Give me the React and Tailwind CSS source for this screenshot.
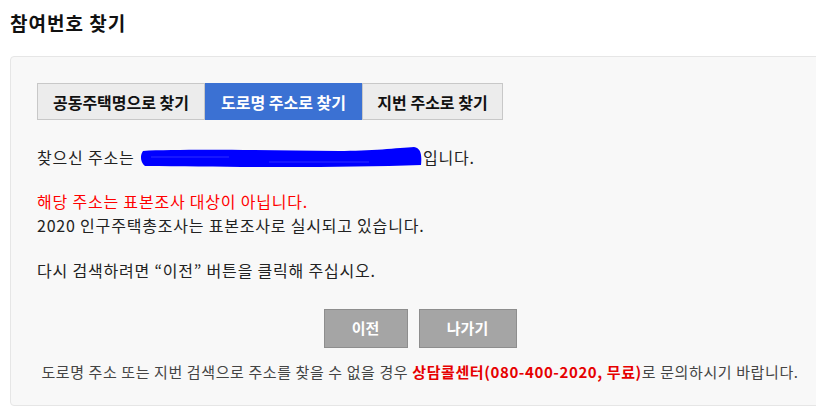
import React from 'react';

const font = { fontFamily: '"Noto Sans CJK KR", "Noto Sans", sans-serif' };

const tabs = [
  { label: '공동주택명으로 찾기', active: false, w: 'w-[168px]' },
  { label: '도로명 주소로 찾기', active: true, w: 'w-[157px]' },
  { label: '지번 주소로 찾기', active: false, w: 'w-[141px]' },
];

const Redaction = () => (
  <svg width="284" height="24" viewBox="0 0 284 24" className="inline-block">
    <path
      d="M4 6 C40 4 120 5 200 6 C230 6 260 3 275 2 C282 3 283 10 282 20 C200 23 90 22 6 21 C1 17 1 10 4 6 Z"
      fill="#0000ff"
    />
    <path d="M12 12 H90 M130 17 H230" stroke="#4d4dff" strokeWidth="1" opacity="0.6" />
  </svg>
);

export default function App() {
  return (
    <div className="w-[816px] h-[407px] overflow-hidden bg-white text-[#222]" style={font}>
      <h1 className="pl-[10px] pt-[9px] text-[19px] leading-[28px] font-bold tracking-[1px] text-[#111]">
        참여번호 찾기
      </h1>

      <div className="ml-[10px] mt-[19px] w-[820px] rounded-[4px] border border-[#e6e6e6] bg-[#f8f8f8] px-[26px] pt-[26px] pb-[21px]">
        {/* Tabs */}
        <div className="flex">
          {tabs.map((t) => (
            <div
              key={t.label}
              className={
                'h-[37px] flex items-center justify-center border text-[16px] font-bold ' +
                t.w +
                (t.active
                  ? ' bg-[#3b71d3] border-[#3b71d3] text-white'
                  : ' bg-[#ececec] border-[#c8c8c8] text-[#111]')
              }
            >
              {t.label}
            </div>
          ))}
        </div>

        {/* Result message */}
        <div className="mt-[25px] text-[16px] leading-[24px] tracking-[0.8px]">
          <p className="flex items-center">
            찾으신 주소는&nbsp;
            <Redaction />
            입니다.
          </p>
          <p className="mt-[20px] text-[#ff0000]">해당 주소는 표본조사 대상이 아닙니다.</p>
          <p>2020 인구주택총조사는 표본조사로 실시되고 있습니다.</p>
          <p className="mt-[21px]">다시 검색하려면 “이전” 버튼을 클릭해 주십시오.</p>
        </div>

        {/* Buttons */}
        <div className="mt-[27px] flex justify-center gap-[11px]">
          <button className="w-[84px] h-[39px] bg-[#a5a5a5] border border-[#8e8e8e] text-white text-[15px] font-bold">
            이전
          </button>
          <button className="w-[98px] h-[39px] bg-[#a5a5a5] border border-[#8e8e8e] text-white text-[15px] font-bold">
            나가기
          </button>
        </div>

        <p className="mt-[12px] text-center whitespace-nowrap text-[15px] leading-[24px] tracking-[0.6px] text-[#444]">
          도로명 주소 또는 지번 검색으로 주소를 찾을 수 없을 경우{' '}
          <span className="font-bold text-[#e60000]">상담콜센터(080-400-2020, 무료)</span>로 문의하시기 바랍니다.
        </p>
      </div>
    </div>
  );
}
